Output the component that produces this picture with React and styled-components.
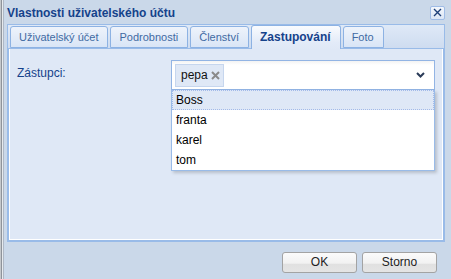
import React from "react";
import styled, { createGlobalStyle } from "styled-components";

const Global = createGlobalStyle`
  html, body { margin: 0; padding: 0; background: #cad8e9; }
  body { font-family: "Liberation Sans", Arial, sans-serif; }
`;

const Window = styled.div`
  width: 451px;
  height: 279px;
  background: #cad8e9;
  box-shadow: inset 1px 0 0 #c4c8cc, inset 2px 0 0 #8e939a, inset 3px 0 0 #e6eaee, inset 4px 0 0 #aeb8c6;
  display: flex;
  flex-direction: column;
  overflow: hidden;
  position: relative;
`;

const Header = styled.div`
  height: 24px;
  display: flex;
  align-items: center;
  justify-content: space-between;
  padding: 0 6px 0 7px;
  box-sizing: border-box;
`;

const Title = styled.div`
  font-size: 12px;
  font-weight: bold;
  color: #15428b;
  line-height: 24px;
  padding-top: 1px;
`;

const CloseTool = styled.div`
  width: 15px;
  height: 14px;
  box-sizing: border-box;
  border: 1px solid #9fbce6;
  border-radius: 2px;
  background: linear-gradient(#f4f8fd, #dbe6f5);
  display: flex;
  align-items: center;
  justify-content: center;
  margin-top: 1px;
`;

const TabPanel = styled.div`
  margin-left: 7px;
  width: 438px;
  height: 218px;
  box-sizing: border-box;
  border: 1px solid #99bbe8;
  display: flex;
  flex-direction: column;
`;

const TabStrip = styled.div`
  height: 23px;
  display: flex;
  align-items: flex-end;
  gap: 2px;
  padding-left: 2px;
  background: linear-gradient(#dfe9f7, #cedcf0);
  position: relative;
  z-index: 1;
`;

const Tab = styled.div`
  box-sizing: border-box;
  height: ${(p) => (p.$active ? "24px" : "22px")};
  margin-bottom: ${(p) => (p.$active ? "-1px" : "0")};
  padding: 0 9px 0 8px;
  border: 1px solid #8db2e3;
  border-bottom: ${(p) => (p.$active ? "none" : "1px solid #8db2e3")};
  border-radius: 3px 3px 0 0;
  background: ${(p) =>
    p.$active
      ? "linear-gradient(#f9fbfe, #e3ebf8 70%, #dfe8f6)"
      : "linear-gradient(#eef3fb, #d9e5f6)"};
  color: ${(p) => (p.$active ? "#15428b" : "#416aa3")};
  font-size: ${(p) => (p.$active ? "12px" : "11px")};
  font-weight: ${(p) => (p.$active ? "bold" : "normal")};
  line-height: ${(p) => (p.$active ? "23px" : "21px")};
  white-space: nowrap;
`;

const Body = styled.div`
  flex: 1;
  box-sizing: border-box;
  border: 1px solid #99bbe8;
  background: #dfe8f6;
  box-shadow: inset 1px 0 0 #fff, inset -1px 0 0 #fff, inset 0 -1px 0 #fff;
  padding: 11px 7px 0 8px;
`;

const FieldRow = styled.div`
  display: flex;
  align-items: flex-start;
`;

const Label = styled.div`
  width: 154px;
  font-size: 12px;
  color: #15428b;
  padding-top: 4px;
  line-height: 18px;
`;

const ComboWrap = styled.div`
  position: relative;
  width: 264px;
`;

const Combo = styled.div`
  box-sizing: border-box;
  height: 30px;
  border: 1px solid #92b4e4;
  background: linear-gradient(#f3f3f3, #fff 4px);
  display: flex;
  align-items: center;
  padding: 0 9px 0 3px;
  justify-content: space-between;
`;

const TagItem = styled.div`
  box-sizing: border-box;
  height: 23px;
  border: 1px solid #c6d6ee;
  background: #dfe8f6;
  display: flex;
  align-items: center;
  gap: 3px;
  padding: 0 3px 0 5px;
  font-size: 12px;
  color: #111;
`;

const DropList = styled.div`
  position: absolute;
  left: 0;
  top: 30px;
  width: 264px;
  box-sizing: border-box;
  border: 1px solid #99bbe8;
  border-top: none;
  background: #fff;
  box-shadow: 2px 2px 3px rgba(0, 0, 0, 0.18);
`;

const Option = styled.div`
  box-sizing: border-box;
  height: 20px;
  line-height: 18px;
  padding-left: 3px;
  font-size: 12px;
  color: #000;
  border: 1px ${(p) => (p.$selected ? "dotted #a3bae9" : "solid transparent")};
  background: ${(p) => (p.$selected ? "#dfe8f6" : "#fff")};
`;

const Footer = styled.div`
  flex: 1;
  display: flex;
  justify-content: flex-end;
  align-items: flex-start;
  gap: 5px;
  padding: 10px 14px 0 0;
`;

const Button = styled.div`
  box-sizing: border-box;
  width: 75px;
  height: 21px;
  border: 1px solid #a3a3a3;
  border-radius: 3px;
  background: linear-gradient(#fbfbfb, #f1f1f1 55%, #e0e0e0 56%, #e4e4e4);
  font-size: 12px;
  color: #222;
  text-align: center;
  line-height: 19px;
`;

const tabs = ["Uživatelský účet", "Podrobnosti", "Členství", "Zastupování", "Foto"];
const options = ["Boss", "franta", "karel", "tom"];

export default function App() {
  return (
    <>
      <Global />
      <Window>
        <Header>
          <Title>Vlastnosti uživatelského účtu</Title>
          <CloseTool>
            <svg width="9" height="9" viewBox="0 0 9 9">
              <path d="M1 1 L8 8 M8 1 L1 8" stroke="#1d3f78" strokeWidth="1.4" fill="none" />
            </svg>
          </CloseTool>
        </Header>
        <TabPanel>
          <TabStrip>
            {tabs.map((t) => (
              <Tab key={t} $active={t === "Zastupování"}>
                {t}
              </Tab>
            ))}
          </TabStrip>
          <Body>
            <FieldRow>
              <Label>Zástupci:</Label>
              <ComboWrap>
                <Combo>
                  <TagItem>
                    pepa
                    <svg width="9" height="9" viewBox="0 0 9 9">
                      <path d="M1 1 L8 8 M8 1 L1 8" stroke="#8a8a8a" strokeWidth="2" fill="none" />
                    </svg>
                  </TagItem>
                  <svg width="9" height="6" viewBox="0 0 9 6">
                    <path d="M1 1 L4.5 4.5 L8 1" stroke="#2a3b58" strokeWidth="2" fill="none" />
                  </svg>
                </Combo>
                <DropList>
                  {options.map((o) => (
                    <Option key={o} $selected={o === "Boss"}>
                      {o}
                    </Option>
                  ))}
                </DropList>
              </ComboWrap>
            </FieldRow>
          </Body>
        </TabPanel>
        <Footer>
          <Button>OK</Button>
          <Button>Storno</Button>
        </Footer>
      </Window>
    </>
  );
}
